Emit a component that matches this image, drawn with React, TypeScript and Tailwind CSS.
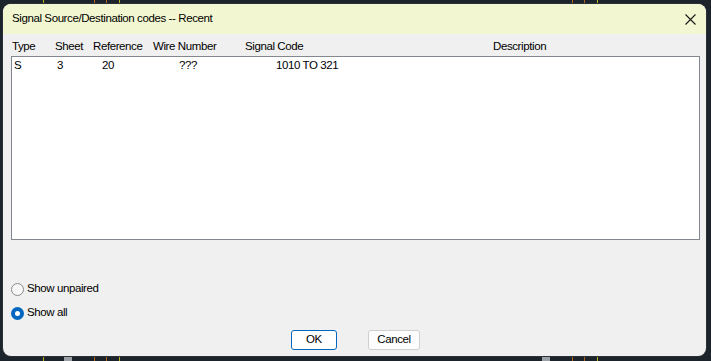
const font = { fontFamily: '"Liberation Sans", Arial, sans-serif' };

function Radio({ checked, label }: { checked?: boolean; label: string }) {
  return (
    <label className="flex items-center gap-[3px] h-[16px]">
      {checked ? (
        <span className="w-[13px] h-[13px] rounded-full bg-[#0067c0] flex items-center justify-center">
          <span className="w-[5px] h-[5px] rounded-full bg-white" />
        </span>
      ) : (
        <span className="w-[13px] h-[13px] rounded-full border border-[#8a8a8a] bg-[#f7f7f7]" />
      )}
      <span className="text-[11.5px] tracking-[-0.4px] text-black">{label}</span>
    </label>
  );
}

export default function App() {
  return (
    <div className="relative w-[711px] h-[361px] bg-[#1d232b] overflow-hidden" style={font}>
      {/* CAD canvas behind the dialog */}
      <svg className="absolute inset-0" width="711" height="361">
        <line x1="43.5" y1="0" x2="43.5" y2="361" stroke="#b7b31e" />
        <line x1="94.5" y1="0" x2="94.5" y2="361" stroke="#b0631c" />
        <line x1="106.5" y1="0" x2="106.5" y2="361" stroke="#b0631c" />
        <line x1="119.5" y1="0" x2="119.5" y2="361" stroke="#b7b31e" />
        <line x1="572.5" y1="0" x2="572.5" y2="361" stroke="#b0631c" />
        <line x1="584.5" y1="0" x2="584.5" y2="361" stroke="#b0631c" />
        <line x1="597.5" y1="0" x2="597.5" y2="361" stroke="#b7b31e" />
        <rect x="64" y="357" width="8" height="4" fill="#9aa0a6" />
        <rect x="542" y="357" width="8" height="4" fill="#9aa0a6" />
      </svg>

      <div className="absolute left-[3px] top-[4px] w-[703px] h-[352px] rounded-[8px] overflow-hidden bg-[#f0f0f0] flex flex-col shadow-[0_0_0_1px_#2a3038] text-[11.5px] tracking-[-0.4px]">
        {/* title bar */}
        <div className="h-[30px] shrink-0 bg-[#f3f7d1] flex items-center justify-between pl-[9px] pr-[9px]">
          <span className="text-black">Signal Source/Destination codes -- Recent</span>
          <svg width="11" height="11" viewBox="0 0 11 11" className="mr-[1px]">
            <path d="M0.5 0.5 L10.5 10.5 M10.5 0.5 L0.5 10.5" stroke="#1a1a1a" strokeWidth="1.1" />
          </svg>
        </div>

        <div className="flex-1 flex flex-col px-[8px]">
          {/* column headers */}
          <div className="relative h-[22px] text-black">
            <span className="absolute left-[1px] top-[4px]">Type</span>
            <span className="absolute left-[44px] top-[4px]">Sheet</span>
            <span className="absolute left-[82px] top-[4px]">Reference</span>
            <span className="absolute left-[142px] top-[4px]">Wire Number</span>
            <span className="absolute left-[234px] top-[4px]">Signal Code</span>
            <span className="absolute left-[482px] top-[4px]">Description</span>
          </div>

          {/* list box */}
          <div className="w-[689px] h-[184px] border border-[#828790] bg-white">
            <div className="relative h-[16px] text-black">
              <span className="absolute left-[2px] top-0">S</span>
              <span className="absolute left-[45px] top-0">3</span>
              <span className="absolute left-[90px] top-0">20</span>
              <span className="absolute left-[167px] top-0">???</span>
              <span className="absolute left-[264px] top-0">1010 TO 321</span>
            </div>
          </div>

          <div className="flex flex-col gap-[8px] mt-[41px]">
            <Radio label="Show unpaired" />
            <Radio checked label="Show all" />
          </div>

          <div className="flex justify-center gap-[31px] mt-[9px] pl-[2px]">
            <button className="w-[46px] h-[20px] rounded-[3px] border border-[#0067c0] bg-white text-black leading-none">
              OK
            </button>
            <button className="w-[52px] h-[20px] rounded-[3px] border border-[#d0d0d0] bg-[#fdfdfd] text-black leading-none">
              Cancel
            </button>
          </div>
        </div>
      </div>
    </div>
  );
}
